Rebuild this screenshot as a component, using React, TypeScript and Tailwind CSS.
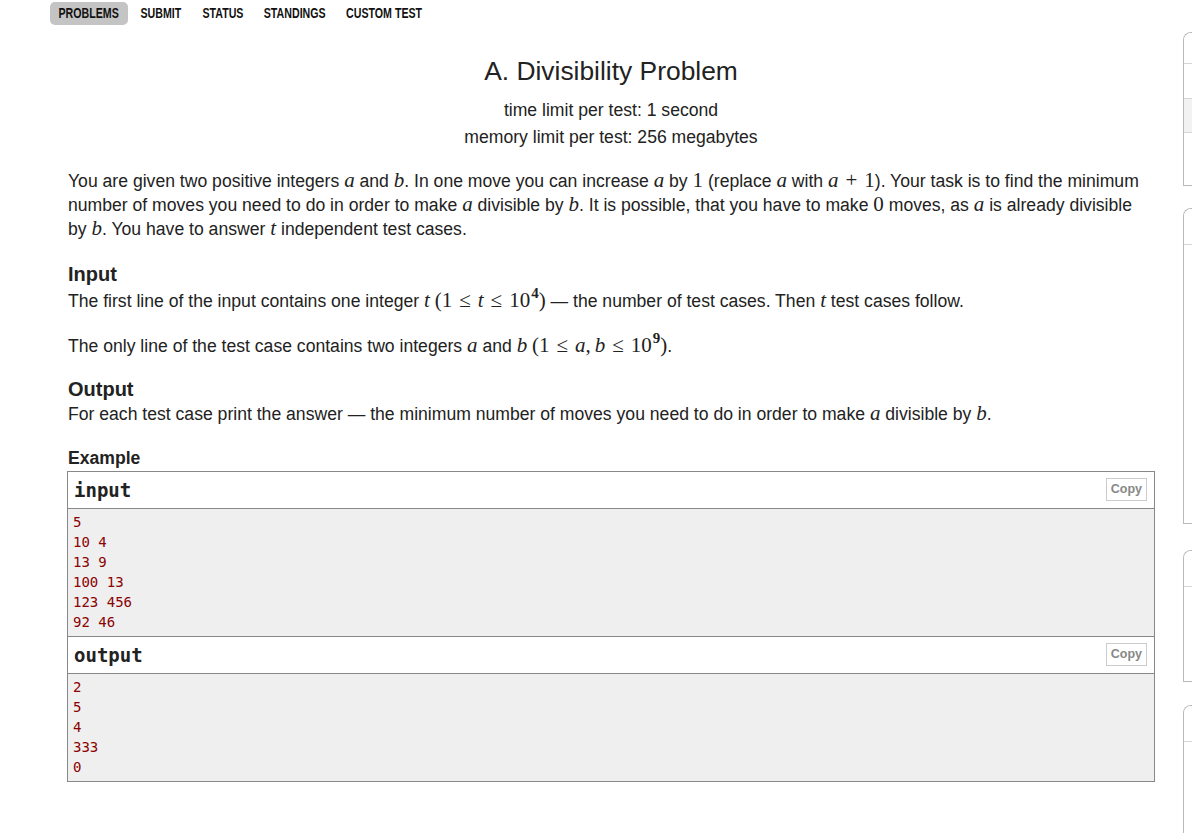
import React from "react";

// math helpers (MathJax-like)
const V = ({ children }: { children: React.ReactNode }) => (
    <span className="font-['Liberation_Serif',serif] italic text-[21px] leading-none">{children}</span>
);
const R = ({ children }: { children: React.ReactNode }) => (
    <span className="font-['Liberation_Serif',serif] text-[21px] leading-none">{children}</span>
);
const Rel = ({ children }: { children: React.ReactNode }) => (
    <span className="font-['Liberation_Serif',serif] text-[21px] leading-none mx-[7px]">{children}</span>
);
const Sup = ({ children }: { children: React.ReactNode }) => (
    <sup className="font-['Liberation_Serif',serif] text-[15px] font-bold relative -top-[9px] ml-[1px] leading-none">{children}</sup>
);

const navItems = [
    { label: "PROBLEMS", w: "w-[78px]", active: true },
    { label: "SUBMIT", w: "w-[65px]" },
    { label: "STATUS", w: "w-[60px]" },
    { label: "STANDINGS", w: "w-[84px]" },
    { label: "CUSTOM TEST", w: "w-[95px]" },
];

const SampleBlock = ({ title, lines }: { title: string; lines: string[] }) => (
    <div>
        <div className="flex items-center justify-between h-[37px] bg-white border-b border-[#888] pl-[6px] pr-[7px]">
            <span className="font-['DejaVu_Sans_Mono',monospace] font-bold text-[19px] text-[#222]">{title}</span>
            <button className="border border-[#ccc] px-[4px] h-[23px] -mt-[2px] text-[12.5px] font-bold text-[#888] font-['Liberation_Sans',sans-serif] leading-none">
                Copy
            </button>
        </div>
        <pre className="bg-[#efefef] pt-[3px] pb-[4px] pl-[5px] font-['DejaVu_Sans_Mono',monospace] text-[14px] leading-[20px] text-[#8b0000]">
            {lines.join("\n")}
        </pre>
    </div>
);

const SideBox = ({ rows, className }: { rows: { h: number; gray?: boolean }[]; className?: string }) => (
    <div className={"shrink-0 border border-r-0 border-[#b9b9b9] rounded-tl-[8px] overflow-hidden " + (className ?? "")}>
        {rows.map((r, i) => (
            <div
                key={i}
                style={{ height: r.h }}
                className={(r.gray ? "bg-[#f2f2f2] " : "bg-white ") + (i > 0 ? "border-t border-[#d6d6d6]" : "")}
            />
        ))}
    </div>
);

export default function App() {
    return (
        <div className="w-[1192px] h-[833px] overflow-hidden bg-white flex font-['Liberation_Sans',Arial,sans-serif] text-[#222]">
            {/* 左側: ナビと問題文 */}
            <div className="w-[1183px] shrink-0">
                <nav className="flex items-center h-[24px] pl-[50px] font-bold text-[14px] text-[#111] mt-[1px]">
                    {navItems.map((n) => (
                        <div
                            key={n.label}
                            className={
                                n.w +
                                " h-[23px] flex items-center justify-center whitespace-nowrap" +
                                (n.active ? " bg-[#c4c4c4] rounded-[5px]" : "")
                            }
                        >
                            <span className="inline-block scale-x-[0.76]">{n.label}</span>
                        </div>
                    ))}
                </nav>

                <div className="ml-[67px] w-[1088px]">
                    {/* 問題ヘッダー */}
                    <div className="text-center mt-[31px]">
                        <div className="text-[26.4px] leading-[30px]">A. Divisibility Problem</div>
                        <div className="text-[17.6px] leading-[27px] mt-[11px]">time limit per test: 1 second</div>
                        <div className="text-[17.6px] leading-[27px]">memory limit per test: 256 megabytes</div>
                    </div>

                    <p className="text-[17.6px] leading-[24px] mt-[18px] pl-[1px]">
                        You are given two positive integers <V>a</V> and <V>b</V>. In one move you can increase <V>a</V> by <R>1</R>{" "}
                        (replace <V>a</V> with <V>a</V>
                        <Rel>+</Rel>
                        <R>1</R>). Your task is to find the minimum number of moves you need to do in order to make <V>a</V>{" "}
                        divisible by <V>b</V>. It is possible, that you have to make <R>0</R> moves, as <V>a</V> is already
                        divisible by <V>b</V>. You have to answer <V>t</V> independent test cases.
                    </p>

                    <div className="mt-[21px] pl-[1px]">
                        <div className="text-[20px] font-bold leading-[24px]">Input</div>
                        <p className="text-[17.6px] leading-[24px] mt-[3px]">
                            The first line of the input contains one integer <V>t</V> <R>(1</R>
                            <Rel>≤</Rel>
                            <V>t</V>
                            <Rel>≤</Rel>
                            <R>10</R>
                            <Sup>4</Sup>
                            <R>)</R> — the number of test cases. Then <V>t</V> test cases follow.
                        </p>
                        <p className="text-[17.6px] leading-[24px] mt-[21px]">
                            The only line of the test case contains two integers <V>a</V> and <V>b</V> <R>(1</R>
                            <Rel>≤</Rel>
                            <V>a</V>
                            <R>,</R>
                            <span className="ml-[4px]" />
                            <V>b</V>
                            <Rel>≤</Rel>
                            <R>10</R>
                            <Sup>9</Sup>
                            <R>)</R>.
                        </p>
                    </div>

                    <div className="mt-[19px] pl-[1px]">
                        <div className="text-[20px] font-bold leading-[24px]">Output</div>
                        <p className="text-[17.6px] leading-[24px] mt-[1px]">
                            For each test case print the answer — the minimum number of moves you need to do in order to make{" "}
                            <V>a</V> divisible by <V>b</V>.
                        </p>
                    </div>

                    <div className="mt-[21px]">
                        <div className="text-[17.6px] font-bold leading-[22px] pl-[1px]">Example</div>
                        <div className="mt-[2px] border border-[#888]">
                            <SampleBlock title="input" lines={["5", "10 4", "13 9", "100 13", "123 456", "92 46"]} />
                            <div className="border-t border-[#888]">
                                <SampleBlock title="output" lines={["2", "5", "4", "333", "0"]} />
                            </div>
                        </div>
                    </div>
                </div>
            </div>

            {/* 右側サイドバー（切れている） */}
            <div className="w-[300px] shrink-0 pt-[32px] flex flex-col">
                <SideBox rows={[{ h: 30 }, { h: 35 }, { h: 34, gray: true }, { h: 53 }]} />
                <SideBox className="mt-[22px]" rows={[{ h: 35 }, { h: 279 }]} />
                <SideBox className="mt-[26px]" rows={[{ h: 35 }, { h: 95 }]} />
                <SideBox className="mt-[23px]" rows={[{ h: 35 }, { h: 200 }]} />
            </div>
        </div>
    );
}
